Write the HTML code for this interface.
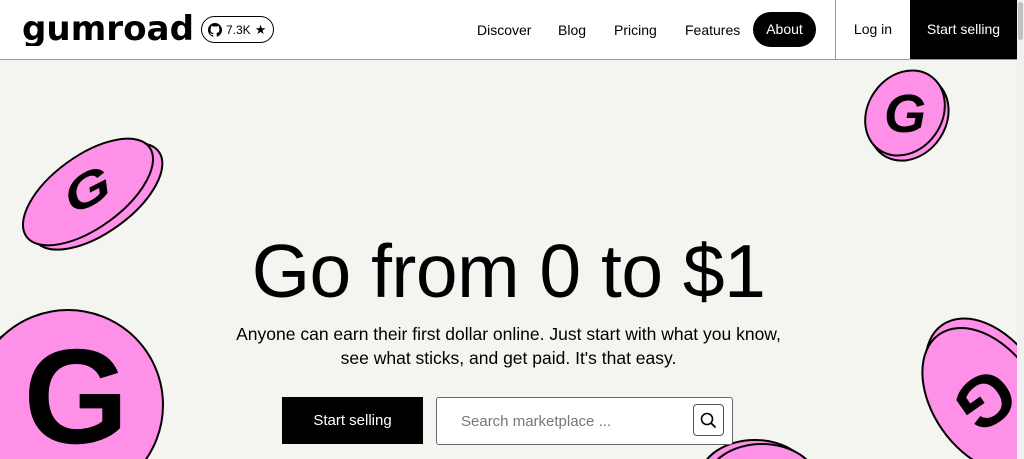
<!DOCTYPE html>
<html><head><meta charset="utf-8"><style>
*{margin:0;padding:0;box-sizing:border-box}
body{width:1024px;height:459px;overflow:hidden;background:#f4f4f0;font-family:"Liberation Sans",sans-serif;color:#000;position:relative}
.nav{position:absolute;left:0;top:0;width:1017px;height:60px;background:#fff;border-bottom:1px solid #9a9a9a}
.gh{position:absolute;left:201px;top:16px;width:73px;height:27px;border:1px solid #000;border-radius:14px;font-size:12px;display:flex;align-items:center;padding-left:6px;gap:4px}
.links a{position:absolute;top:22px;font-size:14px;color:#000;text-decoration:none}
.about{position:absolute;left:753px;top:12px;width:63px;height:35px;background:#000;color:#fff;border-radius:18px;font-size:14px;text-align:center;line-height:35px}
.login{position:absolute;left:835px;top:0;width:75px;height:59px;border-left:1px solid #9a9a9a;font-size:14px;text-align:center;line-height:59px}
.ss{position:absolute;left:910px;top:0;width:107px;height:59px;background:#000;color:#fff;font-size:14px;text-align:center;line-height:59px}
.sb{position:absolute;left:1017px;top:0;width:7px;height:459px;background:#f0f0f0}
.sb i{position:absolute;left:1px;top:2px;width:5px;height:38px;background:#c1c1c1;border-radius:3px}
h1{position:absolute;left:0;width:1017px;top:228px;text-align:center;font-size:75px;font-weight:400;letter-spacing:-0.5px}
p{position:absolute;left:0;width:1017px;top:322px;text-align:center;font-size:17.5px;line-height:24px}
.btn{position:absolute;left:282px;top:397px;width:141px;height:47px;background:#000;color:#fff;font-size:15px;text-align:center;line-height:47px}
.search{position:absolute;left:436px;top:397px;width:297px;height:48px;border:1px solid #666;background:#fff;border-radius:3px}
.search span{position:absolute;left:24px;top:15px;font-size:15px;color:#777}
.sbtn{position:absolute;left:256px;top:6px;width:31px;height:32px;border:1px solid #555;border-radius:4px}
</style></head><body>
<svg style="position:absolute;left:0;top:0" width="1017" height="459">
<g stroke="#000" stroke-width="2" fill="#ff90e8">
<g transform="translate(88,192) rotate(-36)">
<ellipse cx="5" cy="9" rx="76" ry="36"/><ellipse cx="0" cy="0" rx="76" ry="36"/>
<text x="0" y="18" font-size="62" font-weight="900" font-style="italic" text-anchor="middle" fill="#000" stroke="none" font-family="Liberation Sans" transform="scale(1,0.75) rotate(12)">G</text></g>
<g transform="translate(905,113) rotate(35)">
<ellipse cx="6" cy="2" rx="37" ry="45"/><ellipse cx="0" cy="0" rx="37" ry="45"/>
<text x="0" y="19" font-size="54" font-weight="900" font-style="italic" text-anchor="middle" fill="#000" stroke="none" font-family="Liberation Sans" transform="rotate(-35)">G</text></g>
<circle cx="58" cy="413" r="95"/><circle cx="68" cy="405" r="95"/>
<text x="76" y="443" font-size="135" font-weight="700" text-anchor="middle" fill="#000" stroke="none" font-family="Liberation Sans">G</text>
<g transform="translate(985,400) rotate(55)">
<ellipse cx="-6" cy="-8" rx="80" ry="52"/><ellipse cx="0" cy="0" rx="80" ry="52"/>
<text x="0" y="24" font-size="72" font-weight="900" text-anchor="middle" fill="#000" stroke="none" font-family="Liberation Sans" transform="rotate(90)">G</text></g>
<ellipse cx="755" cy="478" rx="55" ry="38"/><ellipse cx="762" cy="482" rx="55" ry="38"/>
</g></svg>
<div class="nav">
<svg style="position:absolute;left:20px;top:10px" width="180" height="36"><text x="2" y="30" font-size="34" font-weight="700" font-family="DejaVu Sans" textLength="172" lengthAdjust="spacingAndGlyphs">gumroad</text></svg>
<div class="gh"><svg width="14" height="14" viewBox="0 0 16 16"><path d="M8 0C3.6 0 0 3.6 0 8c0 3.5 2.3 6.5 5.5 7.6.4.1.5-.2.5-.4v-1.4c-2.2.5-2.7-1-2.7-1-.4-.9-.9-1.2-.9-1.2-.7-.5.1-.5.1-.5.8.1 1.2.8 1.2.8.7 1.2 1.9.9 2.3.7.1-.5.3-.9.5-1.1-1.8-.2-3.6-.9-3.6-4 0-.9.3-1.6.8-2.1-.1-.2-.4-1 .1-2.1 0 0 .7-.2 2.2.8.6-.2 1.3-.3 2-.3s1.4.1 2 .3c1.5-1 2.2-.8 2.2-.8.4 1.1.2 1.9.1 2.1.5.6.8 1.3.8 2.1 0 3.1-1.9 3.7-3.6 3.9.3.3.5.8.5 1.5v2.2c0 .2.1.5.6.4C13.7 14.5 16 11.5 16 8c0-4.4-3.6-8-8-8z"/></svg>7.3K <span style="font-size:13px">★</span></div>
<div class="links"><a style="left:477px">Discover</a><a style="left:558px">Blog</a><a style="left:614px">Pricing</a><a style="left:685px">Features</a></div>
<div class="about">About</div>
<div class="login">Log in</div>
<div class="ss">Start selling</div>
</div>
<div class="sb"><i></i></div>
<h1>Go from 0 to $1</h1>
<p>Anyone can earn their first dollar online. Just start with what you know,<br>see what sticks, and get paid. It's that easy.</p>
<div class="btn">Start selling</div>
<div class="search"><span>Search marketplace ...</span><div class="sbtn"><svg width="29" height="30" viewBox="0 0 29 30"><circle cx="13" cy="14" r="5.5" fill="none" stroke="#000" stroke-width="1.6"/><path d="M17 18l4.5 4.5" stroke="#000" stroke-width="1.8"/></svg></div></div>
</body></html>
